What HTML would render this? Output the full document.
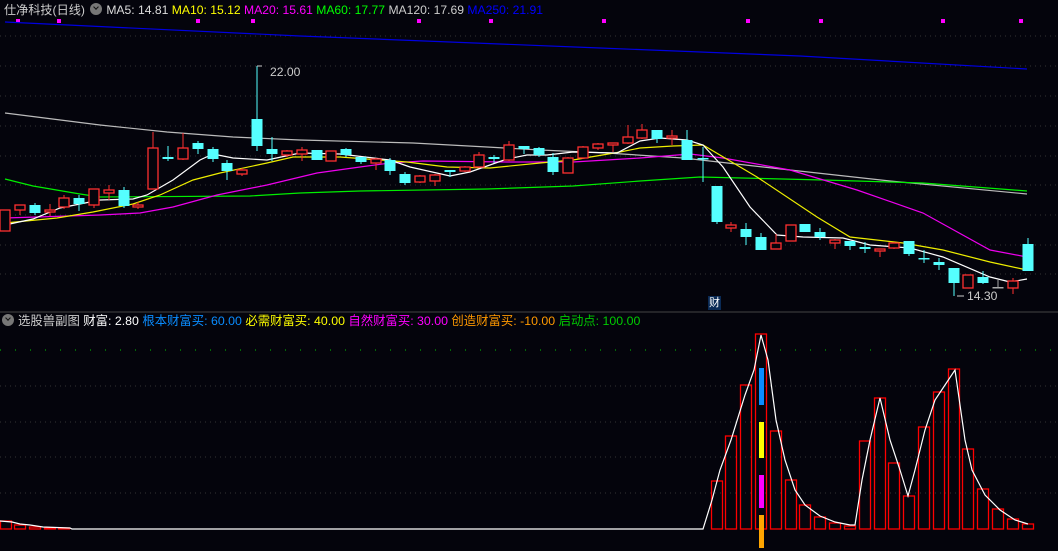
<!DOCTYPE html>
<html><head><meta charset="utf-8"><style>
html,body{margin:0;padding:0;background:#04040c;width:1058px;height:551px;overflow:hidden}
svg{position:absolute;left:0;top:0}
.t{position:absolute;font-family:"Liberation Sans","Noto Sans CJK SC",sans-serif;font-size:12.15px;white-space:nowrap;line-height:14px}
.ic{display:inline-block;width:12px;height:12px;border-radius:50%;background:#777;vertical-align:-1px;position:relative;margin-right:4px}
.ic:after{content:"";position:absolute;left:3.5px;top:2px;width:3px;height:3px;border-right:1.5px solid #111;border-bottom:1.5px solid #111;transform:rotate(45deg)}
</style></head><body>
<svg id="s" width="1058" height="551" xmlns="http://www.w3.org/2000/svg"></svg>
<div class="t" style="left:4px;top:3px;color:#ccc">仕净科技(日线) <span class="ic" style="margin-left:2px"></span><span style="color:#ddd">MA5: 14.81</span> <span style="color:#ff0">MA10: 15.12</span> <span style="color:#f0f">MA20: 15.61</span> <span style="color:#0f0">MA60: 17.77</span> <span style="color:#ccc">MA120: 17.69</span> <span style="color:#00f">MA250: 21.91</span></div>
<div class="t" style="left:2px;top:314px;color:#ccc;font-size:12.37px"><span class="ic"></span>选股兽副图 <span style="color:#fff">财富: 2.80</span> <span style="color:#0a8cff">根本财富买: 60.00</span> <span style="color:#ff0">必需财富买: 40.00</span> <span style="color:#f0f">自然财富买: 30.00</span> <span style="color:#ff9900">创造财富买: -10.00</span> <span style="color:#0c0">启动点: 100.00</span></div>
<div class="t" style="left:270px;top:65px;color:#ccc">22.00</div>
<div class="t" style="left:967px;top:289px;color:#ccc">14.30</div>
<div class="t" style="left:708px;top:296px;color:#fff;background:#0a2a55;font-size:11px;line-height:14px;padding:0 1px">财</div>
<script>
var s=document.getElementById('s'),h='';
function L(x1,y1,x2,y2,c,w,d){h+='<line x1="'+x1+'" y1="'+y1+'" x2="'+x2+'" y2="'+y2+'" stroke="'+c+'" stroke-width="'+(w||1)+'"'+(d?' stroke-dasharray="'+d+'"':'')+'/>';}
function P(pts,c){h+='<polyline fill="none" stroke="'+c+'" stroke-width="1.2" points="'+pts+'"/>';}
function R(x,y,w,hh,c,f){h+='<rect x="'+x+'" y="'+y+'" width="'+w+'" height="'+hh+'" fill="'+(f||'none')+'" stroke="'+(f?'none':c)+'" stroke-width="1.3"/>';}
[36,66,96,126,156,185,215,245,274].forEach(function(y){L(0,y,1058,y,'#333','1','1 4');});
[386,422,457,493].forEach(function(y){L(0,y,1058,y,'#333','1','1 4');});
L(0,350,1058,350,'#0c0','1','1 14');
L(0,312,1058,312,'#444',1);
[18,59,198,253,419,491,604,748,821,943,1021].forEach(function(x){h+='<rect x="'+(x-2)+'" y="19" width="4" height="4" fill="#f0f"/>';});
P('5,22 300,36 600,48 800,56 1027,69','#0000e0');
P('5,113 100,125 167,132 233,137 300,140 413,143 487,147 540,150 607,153 683,158 790,170 890,181 1027,194','#bbb');
P('5,179 33,186 80,194 100,197 250,196 300,193 360,191 487,189 573,186 640,181 700,177 823,180 923,183 1027,191','#0e0');
P('5,218 100,215 140,213 173,207 217,195 267,185 317,173 360,167 390,163 423,161 507,162 573,162 640,158 690,154 723,158 790,170 857,190 923,213 990,250 1027,257','#e0e');
P('5,223 57,218 93,212 133,204 160,195 193,180 220,173 267,163 293,157 340,157 407,162 447,167 490,168 540,163 573,160 620,152 640,148 673,146 703,145 757,177 817,217 850,237 903,243 943,250 990,262 1027,270','#ee0');
P('5,225 33,219 60,208 100,200 133,199 147,195 173,180 200,160 213,154 233,158 267,160 300,153 340,154 390,160 410,167 450,176 470,172 507,159 527,155 547,155 573,152 617,153 640,141 660,138 687,140 703,145 723,167 750,207 777,235 803,237 843,238 870,245 910,248 943,257 990,277 1010,282 1027,279','#fff');
var C=[[5,210,231,210,231,'r'],[20,205,210,205,215,'r'],[35,205,213,203,215,'c'],[50,210,212,204,216,'r'],[64,198,207,195,209,'r'],[79,198,204,195,211,'c'],[94,189,205,189,208,'r'],[109,190,193,185,200,'r'],[124,190,206,187,208,'c'],[138,205,207,202,209,'r'],[153,148,189,132,189,'r'],[168,157,159,146,161,'c'],[183,148,159,133,160,'r'],[198,143,149,141,154,'c'],[213,149,159,147,162,'c'],[227,163,171,160,180,'c'],[242,170,174,168,176,'r'],[257,119,146,66,151,'c'],[272,149,154,137,161,'c'],[287,151,155,150,157,'r'],[302,150,154,147,161,'r'],[317,150,160,150,160,'c'],[331,151,161,151,161,'r'],[346,149,155,148,157,'c'],[361,157,162,157,164,'c'],[376,159,163,158,170,'r'],[390,160,171,158,175,'c'],[405,174,183,172,185,'c'],[420,176,182,175,183,'r'],[435,175,181,174,186,'r'],[450,170,172,170,177,'c'],[465,167,171,166,172,'r'],[479,155,167,152,168,'r'],[494,157,159,155,163,'c'],[509,145,160,141,161,'r'],[524,146,149,146,154,'c'],[539,148,155,147,157,'c'],[553,157,172,153,175,'c'],[568,158,173,157,173,'r'],[583,147,158,146,159,'r'],[598,144,148,143,150,'r'],[613,143,145,143,152,'r'],[628,137,143,125,144,'r'],[642,130,138,124,139,'r'],[657,130,139,130,143,'c'],[672,136,138,130,145,'r'],[687,140,160,130,160,'c'],[703,158,159,147,182,'c'],[717,186,222,186,224,'c'],[731,225,228,222,232,'r'],[746,229,237,223,245,'c'],[761,237,250,233,250,'c'],[776,243,249,234,249,'r'],[791,225,241,225,241,'r'],[805,224,232,224,232,'c'],[820,232,237,228,240,'c'],[835,240,243,239,249,'r'],[850,241,246,241,250,'c'],[865,247,249,242,253,'c'],[880,249,251,249,257,'r'],[894,243,248,242,249,'r'],[909,241,254,241,256,'c'],[924,258,259,250,263,'c'],[939,262,265,258,270,'c'],[954,268,283,268,296,'c'],[968,275,288,275,288,'r'],[983,277,283,271,284,'c'],[998,287,288,280,288,'g'],[1013,281,288,278,294,'r'],[1028,244,271,238,271,'c']];
C.forEach(function(c){var x=c[0],col=c[5]=='r'?'#ff3030':c[5]=='c'?'#55ffff':'#aaa';
L(x,c[3],x,c[4],col,1);
if(c[5]=='c'||c[5]=='g'){h+='<rect x="'+(x-5.5)+'" y="'+c[1]+'" width="11" height="'+Math.max(1.5,c[2]-c[1])+'" fill="'+col+'"/>';}
else{h+='<rect x="'+(x-5)+'" y="'+c[1]+'" width="10" height="'+Math.max(1,c[2]-c[1])+'" fill="#04040c" stroke="'+col+'" stroke-width="1.3"/>';}
});
L(257,66,262,66,'#ccc',1);L(957,296,964,296,'#ccc',1);
var B=[[0,521],[14,525],[29,527],[44,528],[58,528],[711,481],[725,436],[740,385],[755,334],[770,431],[785,480],[799,505],[814,517],[829,523],[844,526],[859,441],[874,398],[888,463],[903,496],[918,427],[933,392],[948,369],[962,449],[977,489],[992,509],[1007,519],[1022,524]];
B.forEach(function(b){R(b[0]+0.5,b[1],11,529-b[1],'#f00');});
h+='<rect x="759" y="368" width="5" height="37" fill="#0a8cff"/><rect x="759" y="422" width="5" height="36" fill="#ff0"/><rect x="759" y="475" width="5" height="33" fill="#f0f"/><rect x="759" y="515" width="5" height="33" fill="#ffa500"/>';
P('0,521 12,522 20,524 30,525 43,527 70,528 72,529 703,529 712,500 720,470 731,440 745,395 754,370 761,335 768,360 776,420 785,460 795,490 805,505 820,516 835,522 850,525 855,525 862,480 870,440 880,398 890,440 900,470 908,496 915,470 925,430 935,400 945,385 955,370 965,440 972,470 985,495 1000,510 1015,520 1028,524','#fff');
s.innerHTML=h;
</script>
</body></html>
